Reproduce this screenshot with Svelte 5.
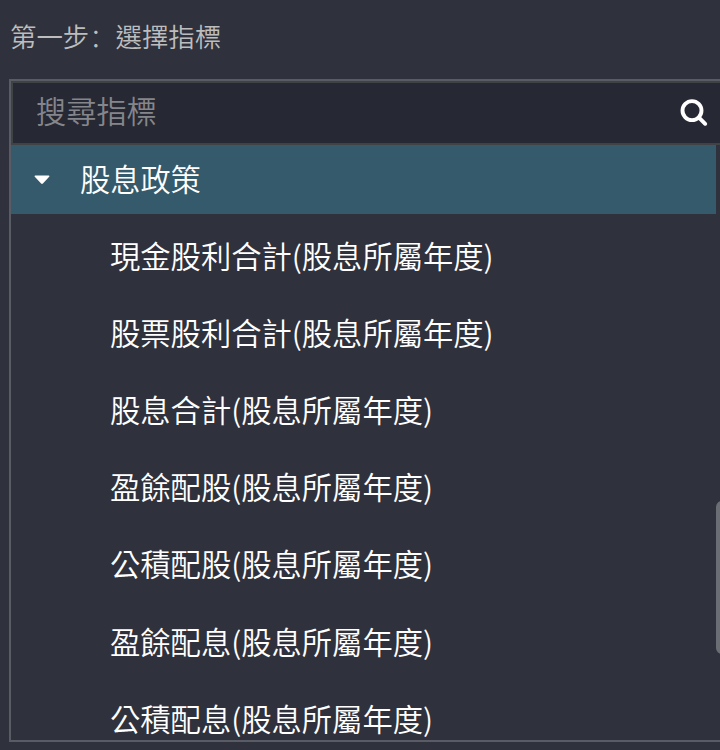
<script>
  let keyword = "";
  let open = true;

  const group = "股息政策";
  const items = [
    "現金股利合計(股息所屬年度)",
    "股票股利合計(股息所屬年度)",
    "股息合計(股息所屬年度)",
    "盈餘配股(股息所屬年度)",
    "公積配股(股息所屬年度)",
    "盈餘配息(股息所屬年度)",
    "公積配息(股息所屬年度)",
  ];
</script>

<div class="step">
  <h2>第一步<span class="colon">：</span>選擇指標</h2>
  <div class="panel">
    <div class="search">
      <input type="text" placeholder="搜尋指標" bind:value={keyword} />
      <svg class="search-icon" viewBox="0 0 28 28">
        <circle cx="12" cy="11.6" r="9.5" />
        <path d="M19 18.6L25.2 24.8" />
      </svg>
    </div>
    <div class="tree">
      <button class="group" on:click={() => (open = !open)}>
        <svg class="caret" class:closed={!open} viewBox="0 0 16 10">
          <path d="M1.2 0.4H14.8Q16 0.7 15.2 1.8L8.9 8.6Q8 9.4 7.1 8.6L0.8 1.8Q0 0.7 1.2 0.4Z" />
        </svg>
        <span>{group}</span>
      </button>
      {#if open}
        <ul>
          {#each items as item}
            <li>{item}</li>
          {/each}
        </ul>
      {/if}
      <div class="thumb"></div>
    </div>
  </div>
</div>

<style>
  :global(body) {
    margin: 0;
    background-color: #2f313c;
  }

  .step {
    box-sizing: border-box;
    height: 750px;
    padding: 0 0 8px 9px;
    display: flex;
    flex-direction: column;
    overflow: hidden;
    background-color: #2f313c;
    color: #fff;
    font-family: "Noto Sans CJK TC", sans-serif;
    font-weight: 350;
  }

  h2 {
    flex: none;
    height: 79px;
    margin: 0;
    padding-left: 1px;
    font-size: 26.4px;
    line-height: 72px;
    font-weight: 350;
    color: #bdbdbd;
  }

  .colon {
    font-family: "Noto Sans CJK SC", sans-serif;
    font-weight: 300;
  }

  .panel {
    flex: 1;
    min-height: 0;
    display: flex;
    flex-direction: column;
    border: 2px solid #595b65;
    border-right: none;
  }

  .search {
    flex: none;
    box-sizing: border-box;
    height: 64px;
    display: flex;
    align-items: center;
    padding: 0 12px 0 23px;
    border: 2px solid #414246;
    border-right: none;
    background-color: #262833;
  }

  input {
    flex: 1;
    min-width: 0;
    height: 60px;
    padding: 0 0 6px;
    box-sizing: border-box;
    border: none;
    outline: none;
    background: transparent;
    color: #fff;
    font: inherit;
    font-size: 30.2px;
  }

  input::placeholder {
    color: #85868b;
    opacity: 1;
  }

  .search-icon {
    flex: none;
    width: 28px;
    height: 28px;
    fill: none;
    stroke: #fff;
    stroke-width: 3.9;
    stroke-linecap: round;
  }

  .tree {
    position: relative;
    flex: 1;
    min-height: 0;
    padding-right: 4px;
    overflow: hidden;
  }

  .group {
    width: 100%;
    height: 69px;
    display: flex;
    align-items: center;
    gap: 30px;
    padding: 0 0 0 23px;
    border: none;
    background-color: #355a6b;
    color: #fff;
    font: inherit;
    font-size: 30.2px;
  }

  .group span {
    padding-bottom: 4px;
  }

  .caret {
    width: 16px;
    height: 10px;
    fill: #fff;
  }

  .caret.closed {
    transform: rotate(-90deg);
  }

  ul {
    margin: 0;
    padding: 2.6px 0 0 99px;
    list-style: none;
  }

  li {
    height: 77.2px;
    font-size: 30.3px;
    line-height: 77.2px;
    white-space: nowrap;
  }

  .thumb {
    position: absolute;
    top: 356px;
    right: -8px;
    width: 12px;
    height: 153px;
    border-radius: 6px;
    background-color: #6b6d75;
  }
</style>
